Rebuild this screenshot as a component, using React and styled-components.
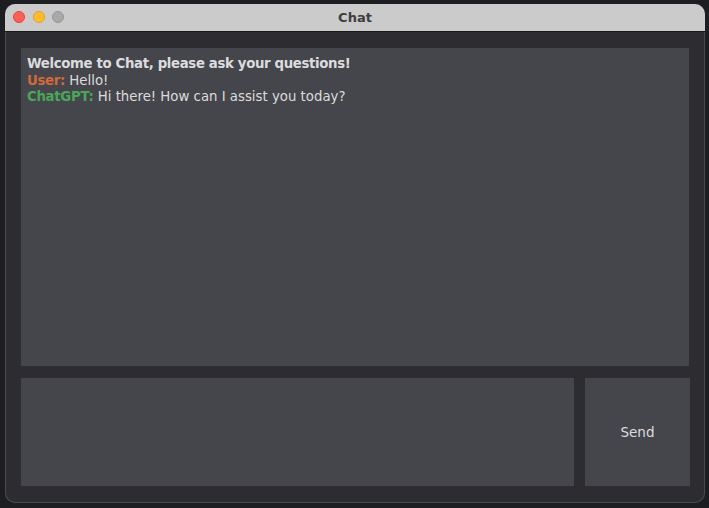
import React, { useState } from "react";
import styled, { createGlobalStyle } from "styled-components";

const GlobalStyle = createGlobalStyle`
  html, body {
    margin: 0;
    padding: 0;
    background: #1d1e21;
  }
  body {
    font-family: "DejaVu Sans", "Liberation Sans", sans-serif;
  }
`;

const Screen = styled.div`
  width: 709px;
  height: 508px;
  padding: 4px 4px 5px 5px;
  box-sizing: border-box;
`;

const Window = styled.div`
  height: 100%;
  display: flex;
  flex-direction: column;
  border-radius: 10px;
  overflow: hidden;
  background: #2d2d31;
  box-shadow: inset 0 0 0 1px #4a4a4e;
`;

const TitleBar = styled.div`
  position: relative;
  height: 27px;
  flex-shrink: 0;
  background: #cbcbcb;
  border-bottom: 1px solid #18181a;
  display: flex;
  align-items: center;
  justify-content: center;
`;

const Lights = styled.div`
  position: absolute;
  left: 8px;
  top: 7px;
  display: flex;
  gap: 7.5px;
`;

const Light = styled.span`
  width: 12px;
  height: 12px;
  border-radius: 50%;
  box-sizing: border-box;
  background: ${(p) => p.color};
  border: 0.5px solid ${(p) => p.edge};
`;

const Title = styled.div`
  font-size: 13px;
  font-weight: bold;
  color: #3e3e3e;
`;

const Body = styled.div`
  flex: 1;
  display: flex;
  flex-direction: column;
  gap: 12px;
  padding: 16px 15px 17px 16px;
`;

const Transcript = styled.div`
  height: 318px;
  background: #45464b;
  padding: 8px 6px;
  box-sizing: border-box;
  font-size: 13.3px;
  line-height: 16.5px;
  color: #dcdcde;
  margin-right: 1px;
`;

const Line = styled.div`
  font-weight: ${(p) => (p.bold ? "bold" : "normal")};
  letter-spacing: ${(p) => (p.bold ? "-0.35px" : "normal")};
  white-space: nowrap;
`;

const Speaker = styled.span`
  font-weight: bold;
  letter-spacing: -0.3px;
  color: ${(p) => p.color};
`;

const Composer = styled.div`
  flex: 1;
  display: flex;
  gap: 11px;
`;

const Input = styled.textarea`
  flex: 1;
  background: #45464b;
  border: none;
  outline: none;
  resize: none;
  color: #dcdcde;
  font-family: inherit;
  font-size: 13px;
  padding: 6px;
`;

const SendButton = styled.button`
  width: 105px;
  background: #45464b;
  border: none;
  color: #dcdcde;
  font-family: inherit;
  font-size: 13.5px;
  padding: 0;
  cursor: pointer;
`;

export default function App() {
  const [text, setText] = useState("");

  return (
    <>
      <GlobalStyle />
      <Screen>
        <Window>
          <TitleBar>
            <Lights>
              <Light color="#fe5f57" edge="#e0443e" />
              <Light color="#febc2e" edge="#dea123" />
              <Light color="#a9a9a9" edge="#979797" />
            </Lights>
            <Title>Chat</Title>
          </TitleBar>
          <Body>
            <Transcript>
              <Line bold>Welcome to Chat, please ask your questions!</Line>
              <Line>
                <Speaker color="#d2693b">User:</Speaker> Hello!
              </Line>
              <Line>
                <Speaker color="#4aa65a">ChatGPT:</Speaker> Hi there! How can I
                assist you today?
              </Line>
            </Transcript>
            <Composer>
              <Input value={text} onChange={(e) => setText(e.target.value)} />
              <SendButton>Send</SendButton>
            </Composer>
          </Body>
        </Window>
      </Screen>
    </>
  );
}
